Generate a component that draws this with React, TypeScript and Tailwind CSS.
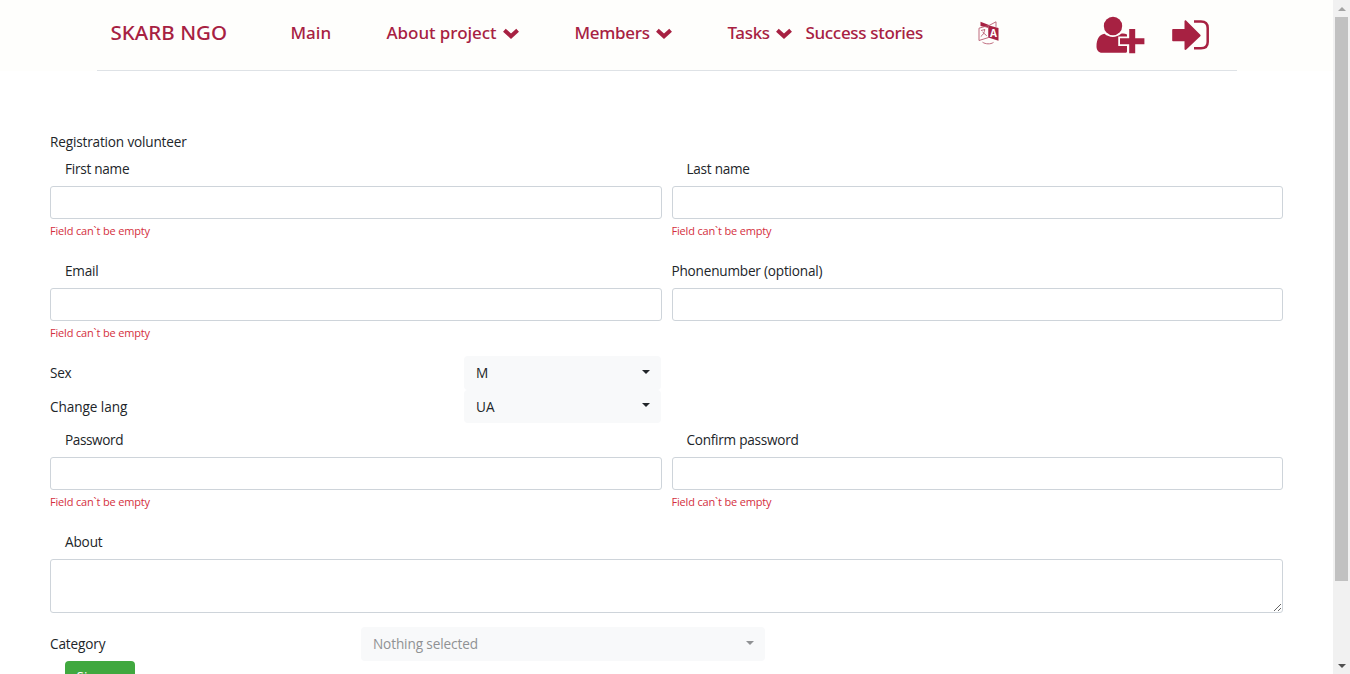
import React from "react";

function Chevron() {
  return (
    <svg viewBox="0 0 16 11" className="ml-[6px] mt-[2px] h-[11px] w-4 shrink-0" fill="none" stroke="currentColor" strokeWidth="4">
      <path d="M1.4 2.2 8 8.2l6.6-6" />
    </svg>
  );
}

function NavItem({ label, menu, className }: { label: string; menu?: boolean; className: string }) {
  return (
    <a className={"flex h-[27px] shrink-0 items-center whitespace-nowrap font-['Noto_Sans',sans-serif] font-medium " + className}>
      {label}
      {menu && <Chevron />}
    </a>
  );
}

function LanguageIcon() {
  return (
    <svg viewBox="0 0 21 24" className="h-6 w-[21px]">
      <path d="M2.5.8 11 4v3L2.5 5z" fill="#a72142" />
      <path d="M10.3 4.3 20.5 7v12.7l-10.2-3.2z" fill="#a72142" />
      <path d="M11 4.5 18 .8v5M1 7.2l9.5-2.7v12L1 19.5zM4.5 21.2c3 2 8 2.3 11 .2M3 9.5l4-1M6.8 8.5c-.4 3-1.8 5.5-4 7M4.5 11l4.3 3.8" fill="none" stroke="#b85b70" strokeWidth=".9" />
      <text x="12" y="15.8" fontSize="10" fontWeight="700" fill="#fff" className="font-['Open_Sans',sans-serif]">A</text>
    </svg>
  );
}

function AddUserIcon() {
  return (
    <svg viewBox="0 0 49 38" className="h-[38px] w-[49px]" fill="#a72142">
      <ellipse cx="17" cy="10" rx="9.2" ry="9.3" />
      <path d="M8.5 17.8C3.5 18.5.5 23 .5 30.5c0 3.4 2.2 6.3 5.5 6.3h23c1.3 0 2-.5 2-1.5V18.6c-1.7-.8-3.7-1.5-6-.8-4.5 4.2-11.8 4.2-16.5 0z" />
      <path d="M33.2 13h6v9.3h9.2v6h-9.2v9h-6v-9H24v-6h9.2z" stroke="#fefefc" strokeWidth="3.5" paintOrder="stroke" />
    </svg>
  );
}

function LoginIcon() {
  return (
    <svg viewBox="0 0 38 32" className="h-8 w-[38px]" fill="#a72142">
      <path d="M1 10h11.5V2c.4-.8 1.2-.8 1.8-.2l14 14c.5.5.5 1 0 1.5l-14 13.3c-.7.7-1.5.4-1.8-.3v-8.1H1c-.5 0-.8-.3-.8-.8V10.8c0-.5.3-.8.8-.8z" />
      <path d="M22 2.4h7c4.3 0 6.7 2.5 6.7 6.5v14c0 4-2.4 6.3-6.7 6.3h-7" fill="none" stroke="#a72142" strokeWidth="2.5" />
    </svg>
  );
}

function Field({ label, labelClass = "pl-[15px] tracking-[-0.2px]", error }: { label: string; labelClass?: string; error?: boolean }) {
  return (
    <div className="h-[102px] min-w-0 flex-1">
      <label className={"block h-[27px] whitespace-nowrap leading-[20px] " + labelClass}>{label}</label>
      <input className="block h-[33px] w-full rounded-[3px] border border-[#ced4da] bg-white px-3 outline-none" />
      {error && <p className="mt-[3px] text-[11px] leading-[18px] tracking-[-0.17px] text-[#d42f40]">Field can`t be empty</p>}
    </div>
  );
}

function Select({ value, className = "" }: { value: string; className?: string }) {
  return (
    <button className={"flex items-center justify-between rounded-[4px] bg-[#f8f9fa] pl-3 pr-[11px] " + className}>
      <span>{value}</span>
      <span className="mb-[3px] border-x-4 border-t-4 border-x-transparent border-t-current" />
    </button>
  );
}

export default function App() {
  return (
    <div className="flex h-[674px] w-full overflow-hidden bg-white font-['Open_Sans',sans-serif] text-[13.6px] leading-[20px] text-[#212529]">
      <div className="flex min-w-0 flex-1 flex-col">
        <header className="flex h-[71px] shrink-0 justify-center bg-[#fefefc]">
          <nav className="flex w-[1140px] items-start border-b border-[#dee2e6] text-[17px] text-[#a72142]">
            <a className="ml-[14px] mt-[18px] w-[180px] whitespace-nowrap font-['Noto_Sans',sans-serif] text-[20.5px] font-medium leading-[29px] tracking-[0.05px]">SKARB NGO</a>
            <NavItem label="Main" className="mt-[19px] w-24" />
            <NavItem label="About project" menu className="mt-[19px] w-[188px] tracking-[-0.05px]" />
            <NavItem label="Members" menu className="mt-[19px] w-[153px] tracking-[-0.3px]" />
            <NavItem label="Tasks" menu className="mt-[19px] w-[78px] tracking-[-0.35px]" />
            <NavItem label="Success stories" className="mt-[19px] w-[172px] tracking-[-0.33px]" />
            <a className="mt-[21px] w-[118px]"><LanguageIcon /></a>
            <a className="mt-4 w-[76px]"><AddUserIcon /></a>
            <a className="mt-[19px]"><LoginIcon /></a>
          </nav>
        </header>
        <main className="flex flex-col px-[50px] pt-[61px]">
          <h1 className="h-[27px] tracking-[-0.17px]">Registration volunteer</h1>
          <form className="flex flex-col">
            <div className="flex gap-[10px]">
              <Field label="First name" labelClass="pl-[15px] tracking-[-0.27px]" error />
              <Field label="Last name" labelClass="pl-[15px] tracking-[-0.27px]" error />
            </div>
            <div className="flex gap-[10px]">
              <Field label="Email" error />
              <Field label="Phonenumber (optional)" labelClass="tracking-[-0.2px]" />
            </div>
            <div className="-mt-[7px] flex h-[34px] w-[611px] items-center justify-between">
              <span className="tracking-[-0.3px]">Sex</span>
              <Select value="M" className="h-[34px] w-[197px]" />
            </div>
            <div className="flex h-[33px] w-[611px] items-center justify-between">
              <span className="tracking-[-0.07px]">Change lang</span>
              <Select value="UA" className="h-[33px] w-[197px]" />
            </div>
            <div className="mt-[7px] flex gap-[10px]">
              <Field label="Password" labelClass="pl-[15px] tracking-[-0.4px]" error />
              <Field label="Confirm password" labelClass="pl-[15px] tracking-[-0.26px]" error />
            </div>
            <label className="h-[27px] pl-[15px] tracking-[-0.15px]">About</label>
            <textarea className="block h-[54px] w-full resize rounded-[3px] border border-[#ced4da] bg-white px-3 outline-none" />
            <div className="mt-[14px] flex h-[34px] items-center">
              <span className="w-[311px] tracking-[-0.15px]">Category</span>
              <Select value="Nothing selected" className="h-[34px] w-[404px] tracking-[-0.12px] text-[#909294]" />
            </div>
            <button className="ml-[15px] flex h-[35px] w-[70px] justify-center rounded-[4px] bg-[#40a83f] pt-[6px] text-white">Sign up</button>
          </form>
        </main>
      </div>
      <aside className="flex w-[17px] shrink-0 flex-col items-center bg-[#f1f1f1]">
        <span className="flex h-[17px] items-center"><span className="border-x-[4px] border-b-4 border-x-transparent border-b-[#a3a3a3]" /></span>
        <span className="h-[564px] w-[13px] bg-[#c1c1c1]" />
        <span className="mt-auto flex h-[17px] items-center"><span className="border-x-[4px] border-t-4 border-x-transparent border-t-[#505050]" /></span>
      </aside>
    </div>
  );
}
